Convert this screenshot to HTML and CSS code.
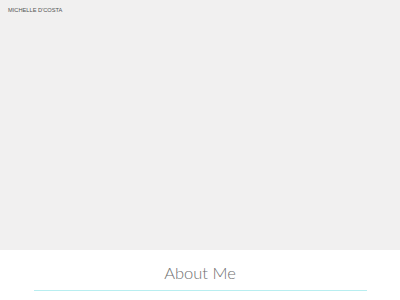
FILE: index.html
```html
<!DOCTYPE html>
<html>
<head>
<meta charset="utf-8">
<link rel="stylesheet" href="styles.css">
</head>
<body>
<header class="hero">
  <nav class="nav"><span class="brand">MICHELLE D'COSTA</span></nav>
</header>
<section class="about">
  <h2 class="title">About Me</h2>
  <div class="rule"></div>
</section>
</body>
</html>
```
FILE: styles.css
```css
html, body { margin: 0; padding: 0; }
body { background: #fff; font-family: "Liberation Sans", Arial, sans-serif; }
.hero { height: 250px; background: #f1f0f0; box-sizing: border-box; }
.nav { padding: 7px 8px 0; }
.brand { font-size: 5.7px; color: #555; letter-spacing: 0; line-height: 7px; display: block; }
.about { background: #fff; padding-top: 12px; display: flex; flex-direction: column; align-items: center; }
.title { margin: 0; font-family: Lato, "Open Sans", sans-serif; font-weight: 300; font-size: 16.5px; line-height: 22px; color: #6f6f6f; }
.rule { margin-top: 6px; width: 333px; height: 1px; background: #b8eef0; }
```
